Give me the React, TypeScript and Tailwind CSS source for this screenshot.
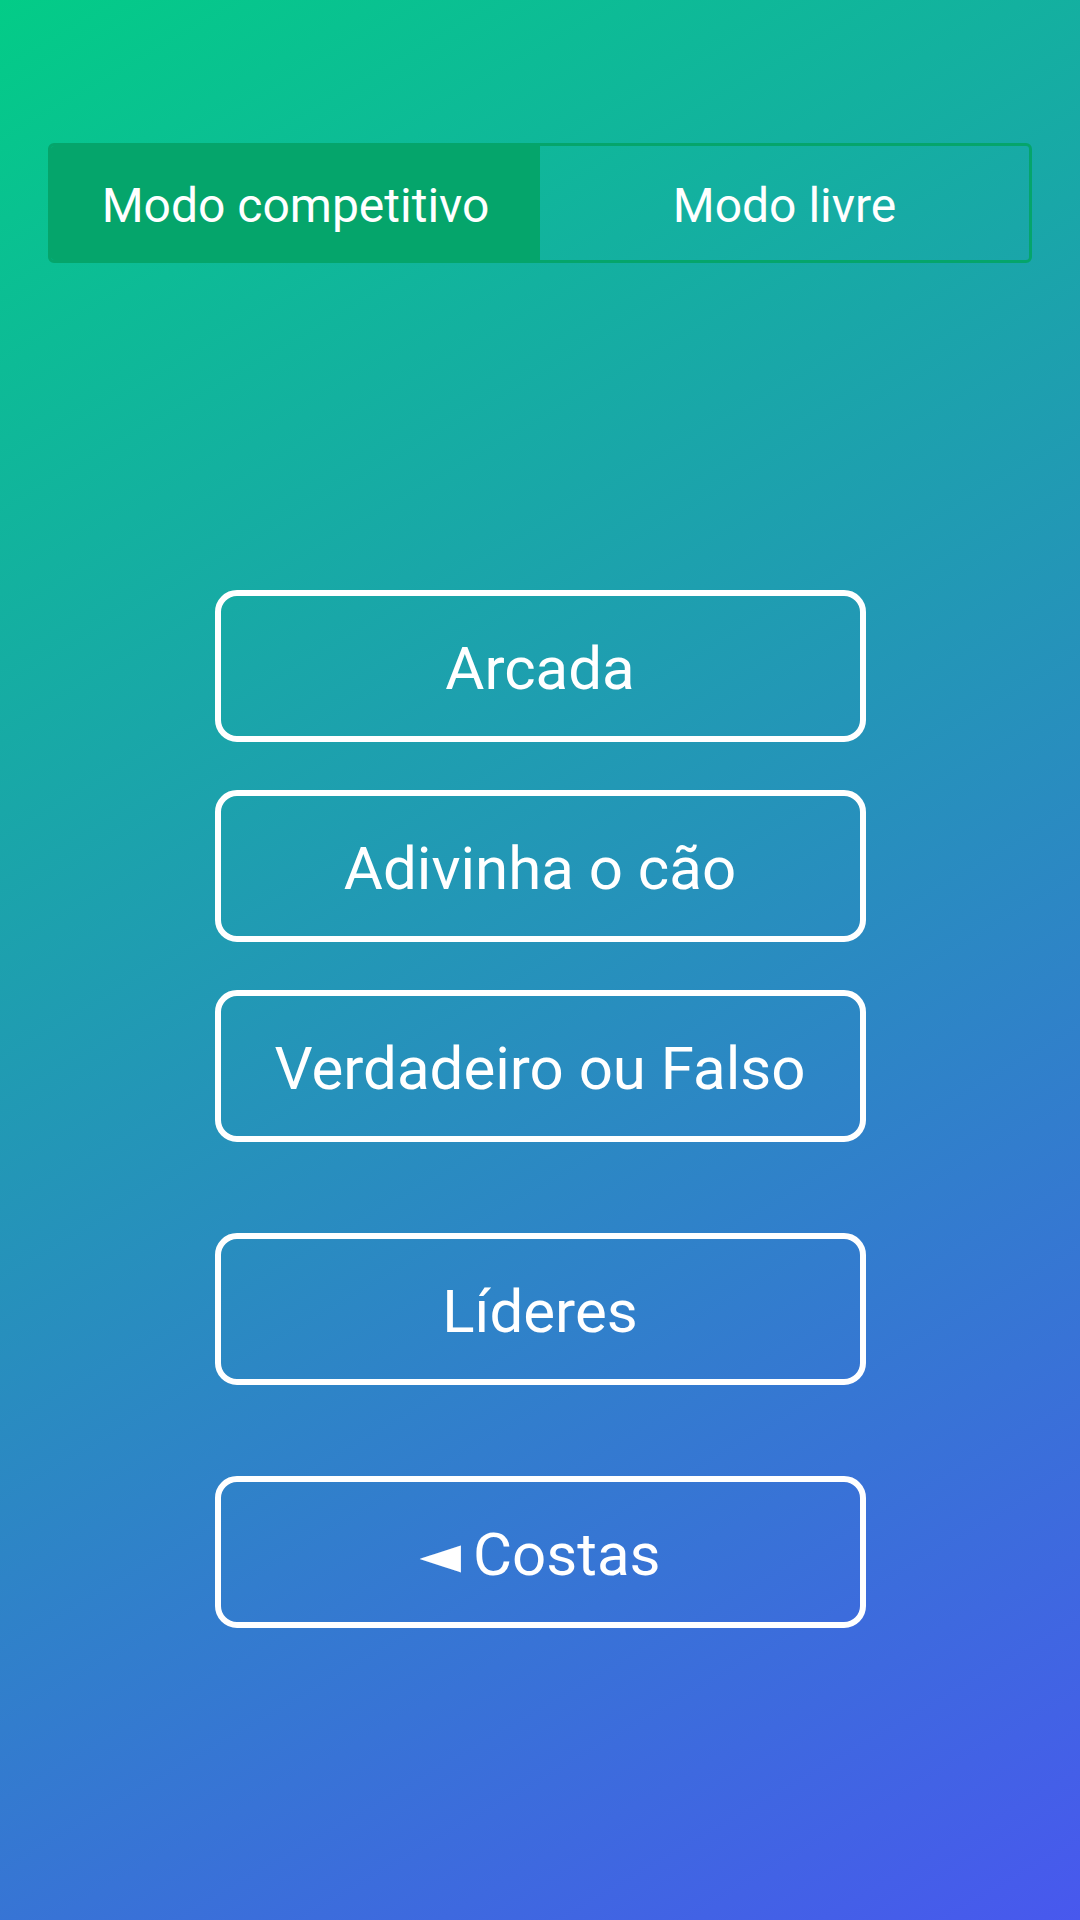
import React from 'react';

const modes = ['Arcada', 'Adivinha o cão', 'Verdadeiro ou Falso'];

function MenuButton({ label, className = '' }: { label: React.ReactNode; className?: string }) {
  return (
    <button
      className={`flex h-[152px] w-[651px] items-center justify-center rounded-[22px] border-[6px] border-white pt-[5px] text-[60px] leading-none text-white ${className}`}
    >
      {label}
    </button>
  );
}

export default function App() {
  return (
    <div className="min-h-[1920px] w-full bg-[linear-gradient(150deg,#03cc87,#4858ee)] font-['Roboto','Liberation_Sans',sans-serif] text-white">
      {/* Mode tabs */}
      <div className="px-12 pt-[143px]">
        <div className="flex h-[120px] overflow-hidden rounded-md border-[3px] border-[#05a56b]">
          <button className="flex flex-1 items-center justify-center bg-[#05a56b] pt-[6px] text-[48px] leading-none">
            Modo competitivo
          </button>
          <button className="flex flex-1 items-center justify-center pt-[6px] text-[48px] leading-none">
            Modo livre
          </button>
        </div>
      </div>

      {/* Menu */}
      <div className="mt-[327px] flex flex-col items-center">
        <div className="flex flex-col gap-12">
          {modes.map((m) => (
            <MenuButton key={m} label={m} />
          ))}
        </div>
        <MenuButton label="Líderes" className="mt-[91px]" />
        <MenuButton
          className="mt-[91px]"
          label={
            <span className="flex items-center">
              <span className="mr-3 text-[54px] font-['DejaVu_Sans',sans-serif]">◄</span>
              Costas
            </span>
          }
        />
      </div>
    </div>
  );
}
